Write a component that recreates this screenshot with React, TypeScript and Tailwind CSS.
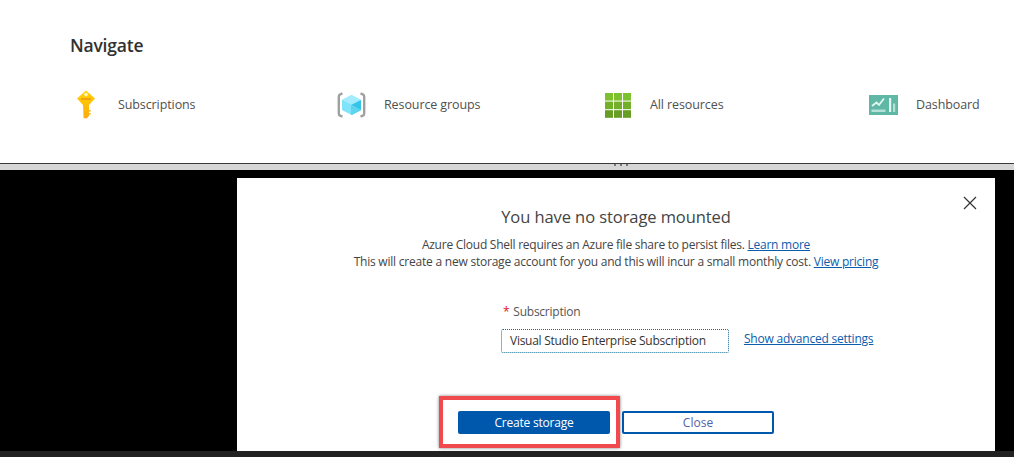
const font = { fontFamily: '"Open Sans", "Noto Sans", sans-serif' };

function KeyIcon() {
  return (
    <svg width="20" height="30" viewBox="0 0 20 30">
      <defs>
        <linearGradient id="k" x1="0" y1="0" x2="0" y2="1">
          <stop offset="0" stopColor="#ffd400" />
          <stop offset="1" stopColor="#fba90f" />
        </linearGradient>
      </defs>
      <path d="M10 0.5 L19 8.5 L13 15 L13 26 L10.5 28.6 L7.6 28 L7 15 L1 8.5 Z" fill="url(#k)" />
      <circle cx="10" cy="4.6" r="1.8" fill="#fff4c4" />
      <rect x="5" y="8" width="10" height="2" fill="#f2a20c" />
      <rect x="13" y="20" width="1.6" height="1.6" fill="#fbb516" />
      <rect x="13" y="23" width="1.6" height="1.6" fill="#fbb516" />
    </svg>
  );
}

function CubeIcon() {
  return (
    <svg width="29" height="26" viewBox="0 0 29 26">
      <path d="M5.5 1.4 L3.2 2.4 Q1.8 3 1.8 4.6 V21.4 Q1.8 23 3.2 23.6 L5.5 24.6" fill="none" stroke="#a0a0a0" strokeWidth="2.4" />
      <path d="M23.5 1.4 L25.8 2.4 Q27.2 3 27.2 4.6 V21.4 Q27.2 23 25.8 23.6 L23.5 24.6" fill="none" stroke="#a0a0a0" strokeWidth="2.4" />
      <path d="M14.5 3 L24 8 V18 L14.5 23 L5 18 V8 Z" fill="#7fe3fb" />
      <path d="M14.5 3 L24 8 L14.5 12.7 L5 8 Z" fill="#a4ecfd" />
      <path d="M14.5 12.7 L24 8 V18 L14.5 23 Z" fill="#37c5e6" />
      <path d="M14.5 12.7 L24 18 L14.5 23 Z" fill="#5fd4ef" />
    </svg>
  );
}

function GridIcon() {
  const rows = ['#7dc12f', '#72b02a', '#669d25'];
  return (
    <svg width="26" height="25" viewBox="0 0 26 25">
      {rows.map((c, r) =>
        [0, 1, 2].map((i) => <rect key={`${r}-${i}`} x={i * 9} y={r * 8.6} width="8" height="7.6" fill={c} />)
      )}
    </svg>
  );
}

function DashIcon() {
  return (
    <svg width="29" height="20" viewBox="0 0 29 20">
      <rect width="29" height="20" fill="#5fb7a5" />
      <path d="M3 11 L7.5 7.5 L10 10 L15 3.5" fill="none" stroke="#e4f6f1" strokeWidth="1.8" />
      <rect x="2.5" y="14.5" width="14" height="2.5" fill="#b4e1d7" />
      <rect x="20" y="3" width="2.2" height="14" fill="#e4f6f1" />
      <rect x="24" y="8.5" width="2.2" height="8.5" fill="#b4e1d7" />
    </svg>
  );
}

const navItems = [
  { label: 'Subscriptions', icon: <KeyIcon /> },
  { label: 'Resource groups', icon: <CubeIcon /> },
  { label: 'All resources', icon: <GridIcon /> },
  { label: 'Dashboard', icon: <DashIcon /> },
];

export default function App() {
  return (
    <div className="relative h-[457px] w-[1014px] overflow-hidden bg-white" style={font}>
      <section className="h-[163px] pl-[70px] pt-[34px]">
        <h2 className="text-[17.5px] leading-[22px] font-semibold tracking-[-0.2px] text-[#323130]">Navigate</h2>
        <div className="mt-[34px] ml-[1px] grid w-[1064px] grid-cols-4">
          {navItems.map((n) => (
            <div key={n.label} className="flex h-[30px] items-center">
              <div className="flex w-[29px] justify-center">{n.icon}</div>
              <span className="ml-[18px] text-[12.5px] tracking-[-0.1px] text-[#505050]">{n.label}</span>
            </div>
          ))}
        </div>
      </section>

      <div className="flex h-[7px] items-start justify-center gap-[4px] border-t border-[#3a3a3a] bg-[#d6d6d6] pl-[228px]">
        <i className="h-[2px] w-[2px] bg-[#777]" />
        <i className="h-[2px] w-[2px] bg-[#777]" />
        <i className="h-[2px] w-[2px] bg-[#777]" />
      </div>

      <div className="h-[281px] bg-black pl-[237px] pt-[8px]">
        <div className="relative h-[273px] w-[758px] bg-white pt-[28px] text-center">
          <button className="absolute top-[18px] right-[18px] text-[#333]" aria-label="Close">
            <svg width="14" height="14" viewBox="0 0 14 14"><path d="M1 1 L13 13 M13 1 L1 13" stroke="#333" strokeWidth="1.2" /></svg>
          </button>
          <h1 className="text-[16.5px] leading-[22px] tracking-[-0.08px] text-[#444]">You have no storage mounted</h1>
          <p className="mt-[9px] text-[12px] leading-[16px] tracking-[-0.25px] text-[#444]">
            Azure Cloud Shell requires an Azure file share to persist files. <a className="text-[#0b5cab] underline">Learn more</a>
          </p>
          <p className="mt-[1px] text-[12px] leading-[16px] tracking-[-0.22px] text-[#444]">
            This will create a new storage account for you and this will incur a small monthly cost. <a className="text-[#0b5cab] underline">View pricing</a>
          </p>
          <div className="mt-[34px] ml-[264px] text-left">
            <div className="ml-[2px] text-[12px] leading-[16px] tracking-[-0.25px] text-[#555]">
              <span className="mr-[4px] text-[#e81123]">*</span>Subscription
            </div>
            <div className="mt-[9px] flex items-center">
              <div className="flex h-[24px] w-[228px] items-center rounded-[2px] border border-dotted border-[#0f6f94] pl-[8px] text-[12px] tracking-[-0.27px] text-[#333]">
                Visual Studio Enterprise Subscription
              </div>
              <a className="mb-[5px] ml-[15px] text-[12px] tracking-[-0.22px] text-[#0b5cab] underline">Show advanced settings</a>
            </div>
          </div>
          <div className="mt-[58px] ml-[221px] flex gap-[12px]">
            <button className="h-[23px] w-[152px] rounded-[2px] bg-[#0058ad] text-[12px] tracking-[-0.2px] text-white">Create storage</button>
            <button className="h-[23px] w-[152px] rounded-[2px] border-2 border-[#0058ad] bg-white text-[12px] leading-[18px] text-[#5560a8]">Close</button>
          </div>
          <div className="absolute top-[218px] left-[202px] h-[52px] w-[181px] border-4 border-[#f04a4f] shadow-[0_0_3px_rgba(0,0,0,0.5)]" />
        </div>
      </div>

      <div className="h-[6px] bg-[#222]" />
    </div>
  );
}
